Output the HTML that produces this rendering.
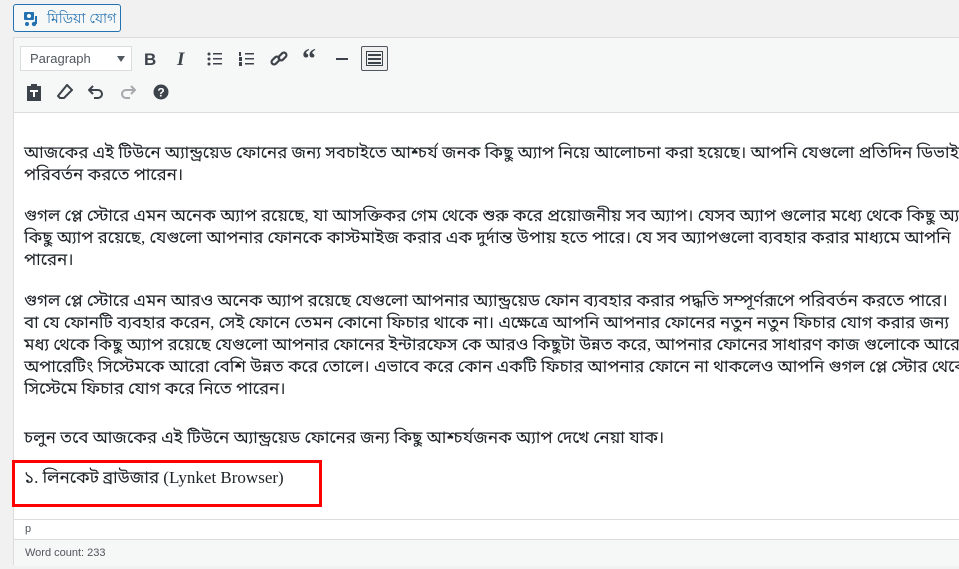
<!DOCTYPE html>
<html><head><meta charset="utf-8"><style>
*{margin:0;padding:0;box-sizing:border-box}
body{width:959px;height:569px;overflow:hidden;background:#f1f1f1;font-family:"Liberation Sans",sans-serif;position:relative;color:#1d2327}
.btn{position:absolute;left:13px;top:4px;width:108px;height:28px;border:1px solid #2271b1;border-radius:3px;background:#f6f7f7;color:#2271b1;font-size:14px;line-height:26px;padding-left:33px}
.box{position:absolute;left:13px;top:37px;width:960px;height:528px;border:1px solid #dcdcde;background:#fff}
.tb{position:absolute;left:0;top:0;right:0;height:75px;background:#f6f7f7;border-bottom:1px solid #dcdcde}
.sel{position:absolute;left:6px;top:8px;width:112px;height:25px;background:#fff;border:1px solid #dcdcde;font-size:13px;color:#50575e;line-height:23px;padding-left:9px}
.sel:after{content:"";position:absolute;right:6px;top:9px;border-left:4px solid transparent;border-right:4px solid transparent;border-top:6px solid #50575e}
.ic{position:absolute;font-size:16px;color:#3c434a;font-weight:bold}
.content{position:absolute;left:10px;top:104px;white-space:nowrap;font-family:"Liberation Serif","Noto Sans Bengali",serif;font-size:17px;line-height:22px;color:#1d2327}
.content p{margin-bottom:19px}
.red{position:absolute;left:12px;top:460px;width:310px;height:47px;border:3px solid #f00}
.path{position:absolute;left:0;right:0;top:481px;height:20px;background:#fff;border-top:1px solid #dcdcde;font-size:11px;color:#50575e;padding-left:11px;line-height:18px}
.wc{position:absolute;left:0;right:0;top:501px;height:27px;background:#f6f7f7;border-top:1px solid #dcdcde;font-size:11px;color:#50575e;padding-left:11px;line-height:26px}
</style></head><body>
<div class="btn"><svg style="position:absolute;left:10px;top:6px" width="16" height="16" viewBox="0 0 16 16"><rect x="0" y="1" width="10" height="8" rx="1" fill="#2271b1"/><circle cx="5" cy="5" r="2" fill="#fff"/><path d="M12 5v8" stroke="#2271b1" stroke-width="2"/><circle cx="10" cy="13" r="2.2" fill="#2271b1"/><circle cx="3" cy="13" r="2" fill="#2271b1"/></svg>মিডিয়া যোগ</div>
<div class="box">
 <div class="tb">
  <div class="sel">Paragraph</div>
  <div class="ic" style="left:130px;top:12px;font-size:17px">B</div>
  <div class="ic" style="left:163px;top:11px;font-style:italic;font-family:'Liberation Serif';font-size:19px">I</div>
  <svg class="ic" style="left:193px;top:14px" width="16" height="14"><g fill="#3c434a"><circle cx="2" cy="2" r="1.5"/><circle cx="2" cy="7" r="1.5"/><circle cx="2" cy="12" r="1.5"/><rect x="6" y="1" width="9" height="1.5"/><rect x="6" y="6" width="9" height="1.5"/><rect x="6" y="11" width="9" height="1.5"/></g></svg>
  <svg class="ic" style="left:225px;top:14px" width="16" height="14"><g fill="#3c434a"><rect x="0" y="0" width="2" height="4"/><rect x="0" y="5" width="3" height="4"/><rect x="0" y="10" width="3" height="4"/><rect x="6" y="1" width="9" height="1.5"/><rect x="6" y="6" width="9" height="1.5"/><rect x="6" y="11" width="9" height="1.5"/></g></svg>
  <svg class="ic" style="left:256px;top:12px" width="18" height="18" viewBox="0 0 18 18"><g fill="none" stroke="#3c434a" stroke-width="2.2"><rect x="1" y="8" width="9" height="5" rx="2.5" transform="rotate(-45 5.5 10.5)"/><rect x="8" y="4" width="9" height="5" rx="2.5" transform="rotate(-45 12.5 6.5)"/></g></svg>
  <div class="ic" style="left:288px;top:6px;font-size:28px;font-family:'Liberation Serif'">“</div>
  <div style="position:absolute;left:322px;top:20px;width:12px;height:2px;background:#3c434a"></div>
  <div style="position:absolute;left:347px;top:8px;width:27px;height:25px;border:1px solid #50575e;background:#f0f0f1;border-radius:2px"><svg style="position:absolute;left:4px;top:4px" width="17" height="15"><rect x="0.5" y="0.5" width="16" height="14" fill="none" stroke="#3c434a"/><g fill="#3c434a"><rect x="2" y="3" width="13" height="2"/><rect x="2" y="7" width="13" height="2"/><rect x="2" y="11" width="13" height="2"/></g></svg></div>
  <svg class="ic" style="left:12px;top:46px" width="16" height="17"><path d="M5 0h6v2h4v15H1V2h4z" fill="#3c434a"/><rect x="4" y="6" width="8" height="2" fill="#fff"/><rect x="7" y="6" width="2" height="7" fill="#fff"/></svg>
  <svg class="ic" style="left:43px;top:46px" width="16" height="16"><path d="M10 1l5 5-8 8H3l-2-2z" fill="none" stroke="#3c434a" stroke-width="2"/></svg>
  <svg class="ic" style="left:74px;top:47px" width="16" height="14"><path d="M5 1L1 5l4 4M1 5h9a4 4 0 010 8H6" fill="none" stroke="#3c434a" stroke-width="2"/></svg>
  <svg class="ic" style="left:106px;top:47px" width="16" height="14"><path d="M11 1l4 4-4 4M15 5H6a4 4 0 000 8h4" fill="none" stroke="#a7aaad" stroke-width="2"/></svg>
  <svg class="ic" style="left:139px;top:46px" width="16" height="16"><circle cx="8" cy="8" r="7.5" fill="#3c434a"/><text x="8" y="12.5" font-size="12" font-weight="bold" fill="#fff" text-anchor="middle" font-family="Liberation Sans">?</text></svg>
 </div>
 <div class="content">
  <p>আজকের এই টিউনে অ্যান্ড্রয়েড ফোনের জন্য সবচাইতে আশ্চর্য জনক কিছু অ্যাপ নিয়ে আলোচনা করা হয়েছে। আপনি যেগুলো প্রতিদিন ডিভাইস<br>পরিবর্তন করতে পারেন।</p>
  <p>গুগল প্লে স্টোরে এমন অনেক অ্যাপ রয়েছে, যা আসক্তিকর গেম থেকে শুরু করে প্রয়োজনীয় সব অ্যাপ। যেসব অ্যাপ গুলোর মধ্যে থেকে কিছু অ্যাপ<br>কিছু অ্যাপ রয়েছে, যেগুলো আপনার ফোনকে কাস্টমাইজ করার এক দুর্দান্ত উপায় হতে পারে। যে সব অ্যাপগুলো ব্যবহার করার মাধ্যমে আপনি<br>পারেন।</p>
  <p>গুগল প্লে স্টোরে এমন আরও অনেক অ্যাপ রয়েছে যেগুলো আপনার অ্যান্ড্রয়েড ফোন ব্যবহার করার পদ্ধতি সম্পূর্ণরূপে পরিবর্তন করতে পারে।<br>বা যে ফোনটি ব্যবহার করেন, সেই ফোনে তেমন কোনো ফিচার থাকে না। এক্ষেত্রে আপনি আপনার ফোনের নতুন নতুন ফিচার যোগ করার জন্য<br>মধ্য থেকে কিছু অ্যাপ রয়েছে যেগুলো আপনার ফোনের ইন্টারফেস কে আরও কিছুটা উন্নত করে, আপনার ফোনের সাধারণ কাজ গুলোকে আরো<br>অপারেটিং সিস্টেমকে আরো বেশি উন্নত করে তোলে। এভাবে করে কোন একটি ফিচার আপনার ফোনে না থাকলেও আপনি গুগল প্লে স্টোর থেকে<br>সিস্টেমে ফিচার যোগ করে নিতে পারেন।</p>
  <p style="margin-top:27px;margin-bottom:18px">চলুন তবে আজকের এই টিউনে অ্যান্ড্রয়েড ফোনের জন্য কিছু আশ্চর্যজনক অ্যাপ দেখে নেয়া যাক।</p>
  <p>১. লিনকেট ব্রাউজার (Lynket Browser)</p>
 </div>
 <div class="path">p</div>
 <div class="wc">Word count: 233</div>
</div>
<div class="red"></div>
</body></html>
